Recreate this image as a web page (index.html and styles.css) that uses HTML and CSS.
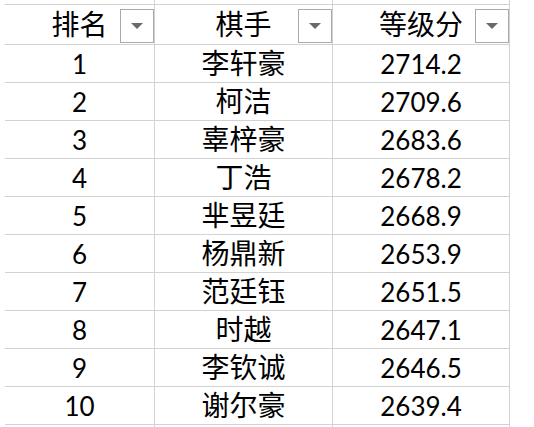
FILE: index.html
```html
<!DOCTYPE html>
<html lang="zh-CN">
<head>
<meta charset="utf-8">
<title>等级分排名</title>
<link rel="stylesheet" href="styles.css">
</head>
<body>
<div class="sheet">
  <div class="cell strip"></div><div class="cell strip"></div><div class="cell strip"></div>

  <div class="cell head">排名<span class="filter"></span></div>
  <div class="cell head">棋手<span class="filter"></span></div>
  <div class="cell head">等级分<span class="filter"></span></div>

  <div class="cell num">1</div><div class="cell name">李轩豪</div><div class="cell num">2714.2</div>
  <div class="cell num">2</div><div class="cell name">柯洁</div><div class="cell num">2709.6</div>
  <div class="cell num">3</div><div class="cell name">辜梓豪</div><div class="cell num">2683.6</div>
  <div class="cell num">4</div><div class="cell name">丁浩</div><div class="cell num">2678.2</div>
  <div class="cell num">5</div><div class="cell name">芈昱廷</div><div class="cell num">2668.9</div>
  <div class="cell num">6</div><div class="cell name">杨鼎新</div><div class="cell num">2653.9</div>
  <div class="cell num">7</div><div class="cell name">范廷钰</div><div class="cell num">2651.5</div>
  <div class="cell num">8</div><div class="cell name">时越</div><div class="cell num">2647.1</div>
  <div class="cell num">9</div><div class="cell name">李钦诚</div><div class="cell num">2646.5</div>
  <div class="cell num">10</div><div class="cell name">谢尔豪</div><div class="cell num">2639.4</div>

  <div class="cell strip end"></div><div class="cell strip end"></div><div class="cell strip end"></div>
</div>
</body>
</html>
```

FILE: styles.css
```css
html, body {
  margin: 0;
  padding: 0;
  background: #ffffff;
}

.sheet {
  display: grid;
  grid-template-columns: 150px 178px 177px;
  grid-template-rows: 5px 40px repeat(10, 38px) 3px;
  padding-left: 5px;
  width: 505px;
  color: #000000;
  font-family: "Noto Sans CJK SC", sans-serif;
}

.cell {
  box-sizing: border-box;
  border-right: 1px solid #d2d2d2;
  border-bottom: 1px solid #d2d2d2;
  text-align: center;
  white-space: nowrap;
}

.strip.end {
  border-bottom: none;
}

.head {
  position: relative;
  font-size: 28px;
  line-height: 37px;
}

.name {
  font-size: 28px;
  line-height: 35px;
}

.num {
  font-family: "Lato", "Noto Sans CJK SC", sans-serif;
  font-size: 26px;
  line-height: 39px;
}

.filter {
  position: absolute;
  right: 0;
  top: 4px;
  width: 34px;
  height: 34px;
  box-sizing: border-box;
  border: 1px solid #a9a9a9;
  background: #ffffff;
}

.filter::after {
  content: "";
  position: absolute;
  left: 10px;
  top: 13px;
  border-left: 6px solid transparent;
  border-right: 6px solid transparent;
  border-top: 6px solid #6a6a6a;
}
```
